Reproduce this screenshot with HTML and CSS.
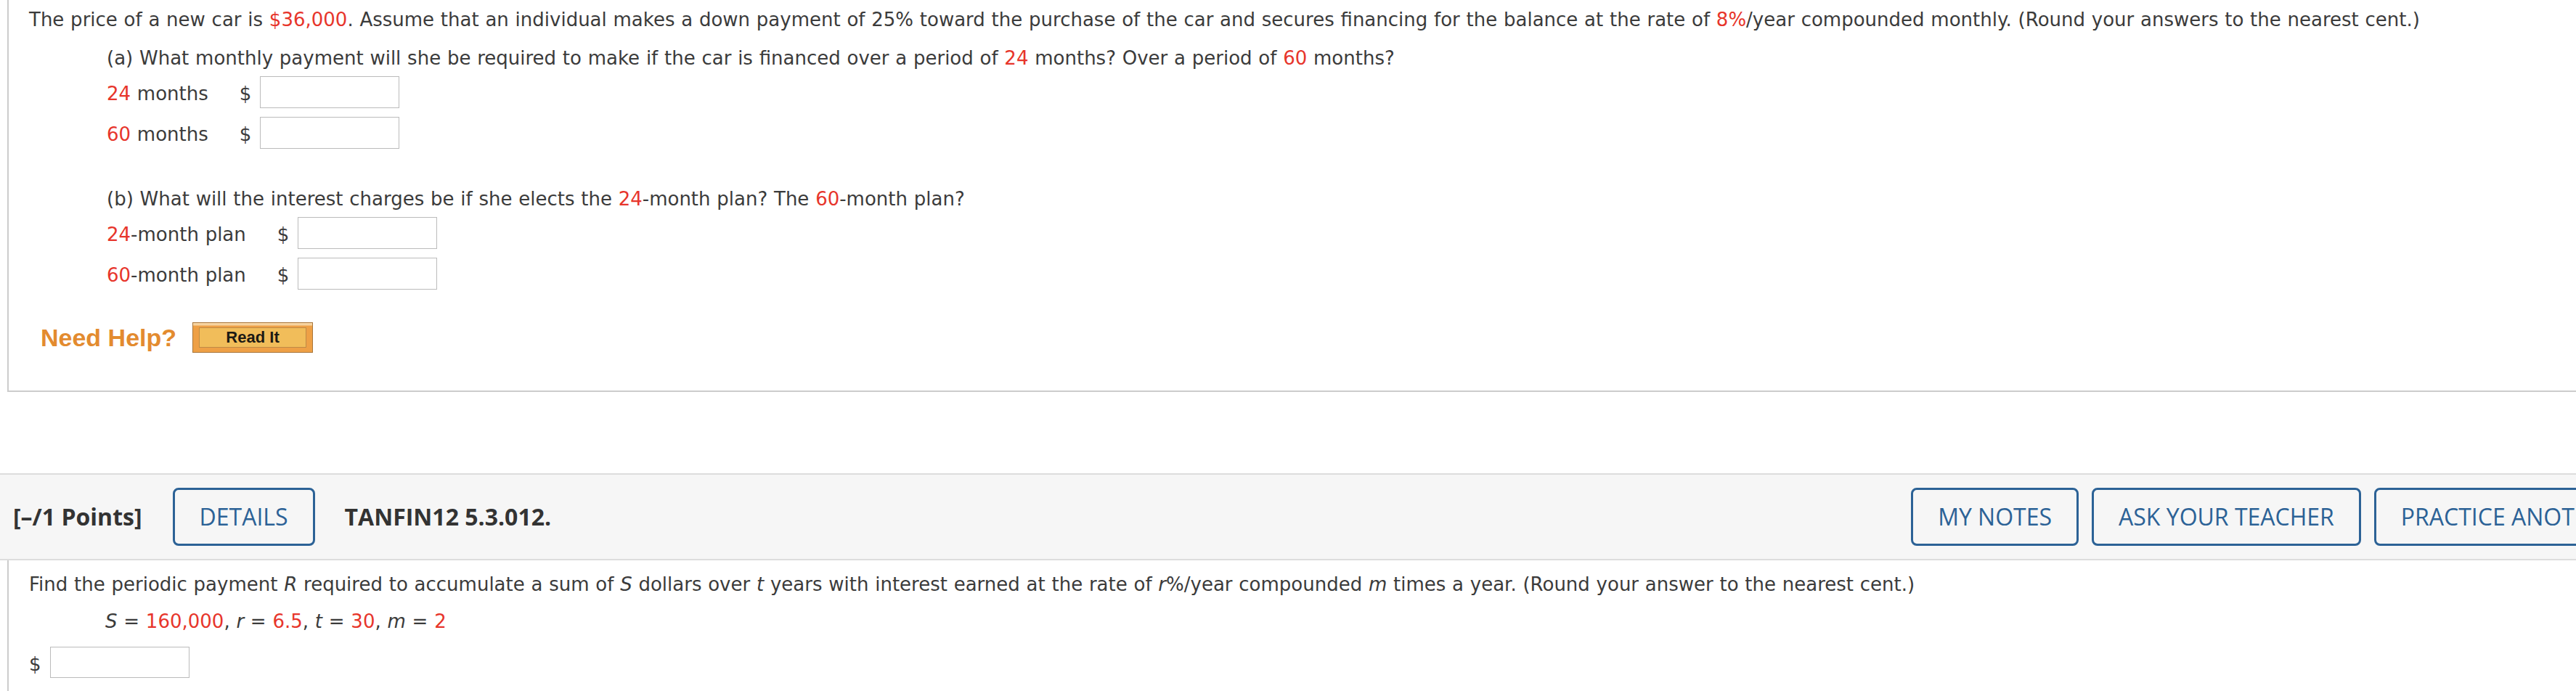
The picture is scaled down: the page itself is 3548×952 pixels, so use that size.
FILE: index.html
```html
<!DOCTYPE html>
<html lang="en">
<head>
<meta charset="utf-8">
<title>Question</title>
<link rel="stylesheet" href="styles.css">
</head>
<body>
<div class="viewport">
  <div class="page">
    <section class="question q1">
      <p class="stem">The price of a new car is <span class="num">$36,000</span>. Assume that an individual makes a down payment of 25% toward the purchase of the car and secures financing for the balance at the rate of <span class="num">8%</span>/year compounded monthly. (Round your answers to the nearest cent.)</p>
      <div class="part part-a">
        <p class="part-q">(a) What monthly payment will she be required to make if the car is financed over a period of <span class="num">24</span> months? Over a period of <span class="num">60</span> months?</p>
        <div class="answer-row"><span class="label"><span class="num">24</span> months</span><span class="cur">$</span><span class="field"></span></div>
        <div class="answer-row"><span class="label"><span class="num">60</span> months</span><span class="cur">$</span><span class="field"></span></div>
      </div>
      <div class="part part-b">
        <p class="part-q">(b) What will the interest charges be if she elects the <span class="num">24</span>-month plan? The <span class="num">60</span>-month plan?</p>
        <div class="answer-row"><span class="label"><span class="num">24</span>-month plan</span><span class="cur">$</span><span class="field"></span></div>
        <div class="answer-row"><span class="label"><span class="num">60</span>-month plan</span><span class="cur">$</span><span class="field"></span></div>
      </div>
      <div class="help">
        <span class="help-label">Need Help?</span>
        <span class="read-it"><span class="read-it-inner">Read It</span></span>
      </div>
    </section>

    <header class="qheader">
      <span class="points">[–/1 Points]</span>
      <span class="btn">DETAILS</span>
      <span class="qid">TANFIN12 5.3.012.</span>
      <div class="actions">
        <span class="btn">MY NOTES</span>
        <span class="btn">ASK YOUR TEACHER</span>
        <span class="btn">PRACTICE ANOTHER</span>
      </div>
    </header>

    <section class="question q2">
      <p class="stem">Find the periodic payment <i>R</i> required to accumulate a sum of <i>S</i> dollars over <i>t</i> years with interest earned at the rate of <i>r</i>%/year compounded <i>m</i> times a year. (Round your answer to the nearest cent.)</p>
      <p class="given"><i>S</i> = <span class="num">160,000</span>, <i>r</i> = <span class="num">6.5</span>, <i>t</i> = <span class="num">30</span>, <i>m</i> = <span class="num">2</span></p>
      <div class="answer-row single"><span class="cur">$</span><span class="field"></span></div>
    </section>
  </div>
</div>
</body>
</html>
```

FILE: styles.css
```css
html, body {
  margin: 0;
  padding: 0;
  background: #ffffff;
}

.viewport {
  width: 100%;
  height: 952px;
  overflow: hidden;
}

.page {
  width: 3662px;
  font-family: "DejaVu Sans", Verdana, sans-serif;
  font-size: 26px;
  line-height: 36px;
  word-spacing: 0.5px;
  color: #3b3b3b;
}

p {
  margin: 0;
}

.num {
  color: #e7352b;
}

i {
  font-style: italic;
}

.question {
  margin-left: 10px;
  border-left: 2px solid #cccccc;
  padding-left: 28px;
}

.q1 {
  border-right: 2px solid #cccccc;
  border-bottom: 2px solid #cccccc;
  padding-top: 9px;
  padding-bottom: 52px;
}

.q1 .stem {
  margin-bottom: 17px;
}

.part {
  padding-left: 107px;
  display: flex;
  flex-direction: column;
  gap: 12px;
}

.part-q {
  margin-bottom: -5px;
}

.part-b {
  margin-top: 51px;
}

.answer-row {
  display: flex;
  align-items: center;
  height: 44px;
}

.answer-row .label,
.answer-row .cur {
  padding-top: 4px;
}

.answer-row .label {
  margin-right: 43px;
}

.answer-row .cur {
  margin-right: 12px;
}

.field {
  display: block;
  width: 190px;
  height: 42px;
  border: 1px solid #bbbbbb;
  background: #ffffff;
}

.help {
  display: flex;
  align-items: center;
  margin-top: 45px;
  padding-left: 16px;
}

.help-label {
  font-family: "Liberation Sans", Arial, sans-serif;
  font-weight: bold;
  font-size: 34px;
  word-spacing: 0;
  color: #e38b2f;
  margin-right: 22px;
}

.read-it {
  display: flex;
  box-sizing: border-box;
  width: 166px;
  height: 42px;
  padding: 6px 8px;
  background: linear-gradient(#f6d3a0 0, #f6d3a0 3px, #eea046 4px, #eea046 100%);
  border: 1px solid #a9763a;
}

.read-it-inner {
  flex: 1;
  display: flex;
  align-items: center;
  justify-content: center;
  background: #f1bd5a;
  border: 1px solid #c08b45;
  font-family: "Liberation Sans", Arial, sans-serif;
  font-weight: bold;
  font-size: 22px;
  word-spacing: 0;
  line-height: 1;
  color: #1d1a14;
}

.qheader {
  margin-top: 112px;
  display: flex;
  align-items: center;
  padding: 18px 18px;
  background: #f6f6f6;
  border-top: 2px solid #dddddd;
  border-bottom: 2px solid #dddddd;
  font-family: "Open Sans", sans-serif;
  font-size: 32px;
  word-spacing: 0;
  color: #333333;
}

.points,
.qid {
  font-weight: 700;
}

.points {
  margin-right: 42px;
}

.qid {
  margin-left: 41px;
}

.btn {
  display: flex;
  align-items: center;
  box-sizing: border-box;
  height: 80px;
  padding: 0 34px;
  border: 3px solid #2c6296;
  border-radius: 8px;
  color: #2c6296;
  font-weight: 400;
  white-space: nowrap;
}

.actions {
  margin-left: auto;
  display: flex;
  gap: 18px;
}

.q2 {
  padding-top: 15px;
  height: 200px;
}

.q2 .given {
  margin-top: 15px;
  padding-left: 105px;
}

.answer-row.single {
  margin-top: 17px;
  height: 43px;
}

.answer-row.single .field {
  height: 41px;
}
```
